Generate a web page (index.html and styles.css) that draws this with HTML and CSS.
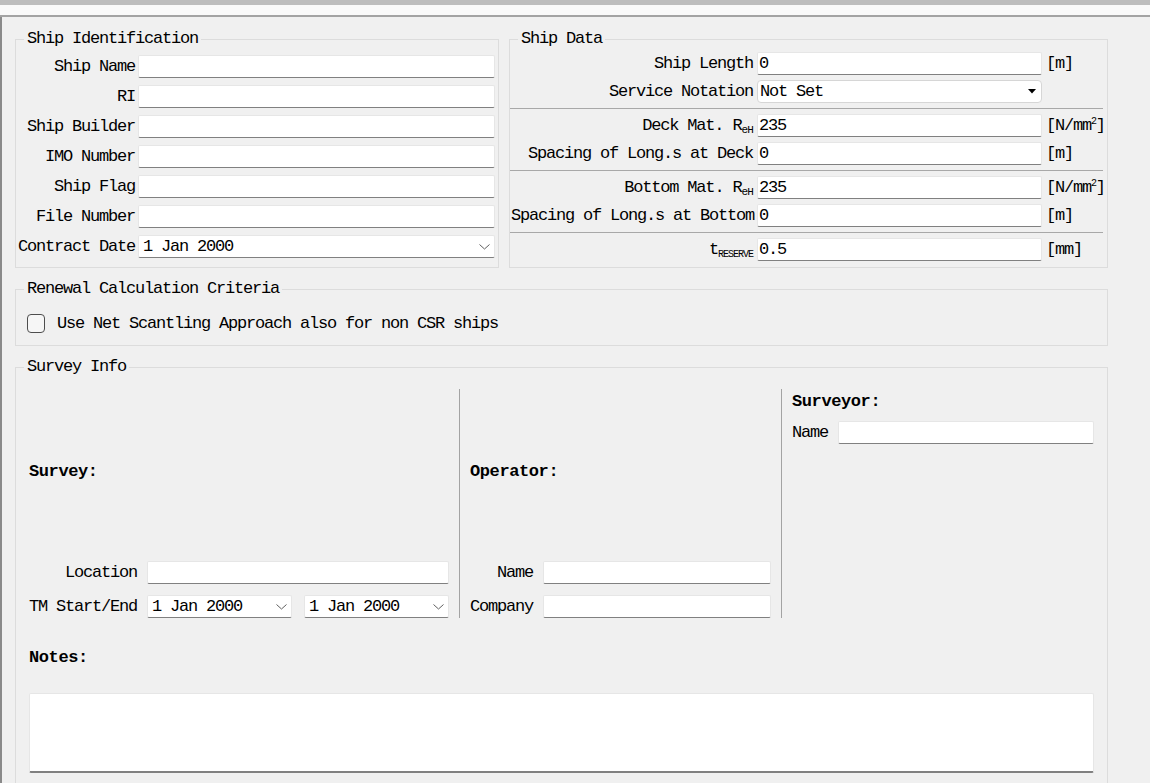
FILE: index.html
```html
<!DOCTYPE html>
<html>
<head>
<meta charset="utf-8">
<link rel="stylesheet" href="styles.css">
</head>
<body>
<div class="titlebar"></div>
<div class="strip"></div>
<main class="page">
  <div class="top-row">
    <fieldset class="group ship-id">
      <legend>Ship Identification</legend>
      <div class="form-grid id-grid">
        <label class="lbl">Ship Name</label><input class="edit" type="text">
        <label class="lbl">RI</label><input class="edit" type="text">
        <label class="lbl">Ship Builder</label><input class="edit" type="text">
        <label class="lbl">IMO Number</label><input class="edit" type="text">
        <label class="lbl">Ship Flag</label><input class="edit" type="text">
        <label class="lbl">File Number</label><input class="edit" type="text">
        <label class="lbl">Contract Date</label>
        <div class="date-combo"><span>1 Jan 2000</span><svg class="chev" width="11" height="6" viewBox="0 0 11 6"><polyline points="0.5,0.5 5.5,5 10.5,0.5" fill="none" stroke="#606060" stroke-width="1"/></svg></div>
      </div>
    </fieldset>
    <fieldset class="group ship-data">
      <legend>Ship Data</legend>
      <div class="form-grid data-grid">
        <label class="lbl">Ship Length</label><input class="edit" type="text" value="0"><span class="unit">[m]</span>
        <label class="lbl">Service Notation</label>
        <div class="combo"><span>Not Set</span><svg class="tri" width="8" height="5" viewBox="0 0 8 5"><path d="M0 0H8L4 4.5Z" fill="#000"/></svg></div><span class="unit"></span>
        <div class="sep"></div>
        <label class="lbl">Deck Mat. R<sub>eH</sub></label><input class="edit" type="text" value="235"><span class="unit">[N/mm<sup>2</sup>]</span>
        <label class="lbl">Spacing of Long.s at Deck</label><input class="edit" type="text" value="0"><span class="unit">[m]</span>
        <div class="sep"></div>
        <label class="lbl">Bottom Mat. R<sub>eH</sub></label><input class="edit" type="text" value="235"><span class="unit">[N/mm<sup>2</sup>]</span>
        <label class="lbl">Spacing of Long.s at Bottom</label><input class="edit" type="text" value="0"><span class="unit">[m]</span>
        <div class="sep"></div>
        <label class="lbl">t<sub class="res">RESERVE</sub></label><input class="edit" type="text" value="0.5"><span class="unit">[mm]</span>
      </div>
    </fieldset>
  </div>

  <fieldset class="group renewal">
    <legend>Renewal Calculation Criteria</legend>
    <label class="check-row"><span class="checkbox"></span><span>Use Net Scantling Approach also for non CSR ships</span></label>
  </fieldset>

  <fieldset class="group survey">
    <legend>Survey Info</legend>
    <div class="survey-cols">
      <div class="col col-survey">
        <div class="col-head"><b>Survey:</b></div>
        <div class="row-grid loc-grid">
          <label class="lbl">Location</label><input class="edit" type="text">
        </div>
        <div class="row-grid loc-grid">
          <label class="lbl">TM Start/End</label>
          <div class="dates">
            <div class="date-combo"><span>1 Jan 2000</span><svg class="chev" width="11" height="6" viewBox="0 0 11 6"><polyline points="0.5,0.5 5.5,5 10.5,0.5" fill="none" stroke="#606060" stroke-width="1"/></svg></div>
            <div class="date-combo"><span>1 Jan 2000</span><svg class="chev" width="11" height="6" viewBox="0 0 11 6"><polyline points="0.5,0.5 5.5,5 10.5,0.5" fill="none" stroke="#606060" stroke-width="1"/></svg></div>
          </div>
        </div>
      </div>
      <div class="vline"></div>
      <div class="col col-operator">
        <div class="col-head"><b>Operator:</b></div>
        <div class="row-grid op-grid">
          <label class="lbl">Name</label><input class="edit" type="text">
        </div>
        <div class="row-grid op-grid">
          <label class="lbl">Company</label><input class="edit" type="text">
        </div>
      </div>
      <div class="vline"></div>
      <div class="col col-surveyor">
        <div class="surveyor-head"><b>Surveyor:</b></div>
        <div class="row-grid sv-grid">
          <label class="lbl left">Name</label><input class="edit" type="text">
        </div>
      </div>
    </div>
    <div class="notes-head"><b>Notes:</b></div>
    <textarea class="notes"></textarea>
  </fieldset>
</main>
</body>
</html>
```

FILE: styles.css
```css
html, body {
  margin: 0;
  padding: 0;
  height: 100%;
  overflow: hidden;
  background: #f0f0f0;
}
body {
  font-family: "Liberation Mono", "DejaVu Sans Mono", monospace;
  font-size: 17px;
  letter-spacing: -1.2px;
  color: #000;
}
.titlebar {
  height: 5px;
  background: #bdbdbd;
}
.strip {
  height: 10px;
  background: #f9f9f9;
  border-bottom: 2px solid #a3a3a3;
}
.page {
  border-left: 2px solid #8a8a8a;
  padding: 13px 0 0 13px;
  width: 1093px;
  height: 800px;
}
.top-row {
  display: grid;
  grid-template-columns: 484px 599px;
  column-gap: 10px;
}
.group {
  margin: 0;
  min-width: 0;
  border: 1px solid #dcdcdc;
  padding: 0;
}
.group legend {
  padding: 0 3px;
  line-height: 18px;
  height: 18px;
}
.ship-id { padding: 7px 3px 9px 2px; }
.ship-id legend { margin-left: 6px; }
.ship-data { padding: 4px 2px 6px 1px; }
.ship-data legend { margin-left: 7px; }
.form-grid {
  display: grid;
  align-items: center;
}
.id-grid {
  grid-template-columns: 117px 1fr;
  column-gap: 3px;
  row-gap: 7px;
}
.data-grid {
  grid-template-columns: 242px 285px 1fr;
  column-gap: 4px;
  row-gap: 5px;
}
.lbl {
  text-align: right;
  white-space: nowrap;
  line-height: 23px;
}
.lbl.left { text-align: left; }
.lbl sub {
  font-size: 11px;
  letter-spacing: -0.8px;
  vertical-align: -3px;
  line-height: 0;
}
.lbl sub.res {
  font-size: 10px;
  letter-spacing: -1px;
}
.unit {
  white-space: nowrap;
  line-height: 23px;
}
.unit sup {
  font-size: 10px;
  line-height: 0;
  vertical-align: 6px;
}
.edit {
  -webkit-appearance: none;
  appearance: none;
  box-sizing: border-box;
  width: 100%;
  height: 23px;
  margin: 0;
  padding: 0 1px;
  border: 1px solid #e6e6e6;
  border-bottom: 1px solid #808080;
  border-radius: 2px;
  background: #fff;
  font: inherit;
  letter-spacing: inherit;
  color: #000;
  outline: none;
}
.date-combo, .combo {
  box-sizing: border-box;
  height: 23px;
  display: flex;
  align-items: center;
  justify-content: space-between;
  background: #fff;
  white-space: nowrap;
}
.date-combo {
  padding: 0 4px 0 4px;
  border: 1px solid #e6e6e6;
  border-bottom: 1px solid #808080;
  border-radius: 2px;
}
.combo {
  padding: 0 5px 0 2px;
  border: 1px solid #d6d6d6;
  border-radius: 4px;
}
.sep {
  grid-column: 1 / -1;
  height: 1px;
  background: #a8a8a8;
  margin: 0 2px 0 -1px;
}
.renewal {
  margin-top: 12px;
  padding: 13px 0 10px 11px;
}
.renewal legend { margin-left: -3px; }
.check-row {
  display: flex;
  align-items: center;
  gap: 12px;
  height: 24px;
}
.checkbox {
  box-sizing: border-box;
  width: 18px;
  height: 19px;
  border: 1px solid #4d4d4d;
  border-radius: 4px;
  background: #f6f6f6;
}
.survey {
  margin-top: 12px;
  padding: 13px 13px 30px 13px;
}
.survey legend { margin-left: -5px; }
.survey-cols {
  display: grid;
  grid-template-columns: 420px 1px 301px 1px 1fr;
  column-gap: 10px;
  height: 229px;
}
.vline { background: #a3a3a3; }
.col {
  display: flex;
  flex-direction: column;
  gap: 11px;
}
.col-head {
  flex: 1;
  display: flex;
  align-items: center;
  padding-top: 4px;
}
b {
  font-weight: bold;
  letter-spacing: -0.4px;
}
.row-grid {
  display: grid;
  align-items: center;
  column-gap: 10px;
}
.loc-grid { grid-template-columns: 108px 1fr; }
.op-grid { grid-template-columns: 63px 1fr; }
.sv-grid { grid-template-columns: 36px 1fr; }
.dates {
  display: grid;
  grid-template-columns: 1fr 1fr;
  column-gap: 12px;
}
.col-surveyor { gap: 10px; }
.surveyor-head {
  padding-top: 4px;
  line-height: 18px;
}
.notes-head {
  margin-top: 31px;
  line-height: 18px;
}
.notes {
  display: block;
  box-sizing: border-box;
  width: 100%;
  height: 80px;
  margin-top: 26px;
  resize: none;
  border: 1px solid #e6e6e6;
  border-bottom: 2px solid #808080;
  border-radius: 2px;
  background: #fff;
  font: inherit;
  outline: none;
}
```
